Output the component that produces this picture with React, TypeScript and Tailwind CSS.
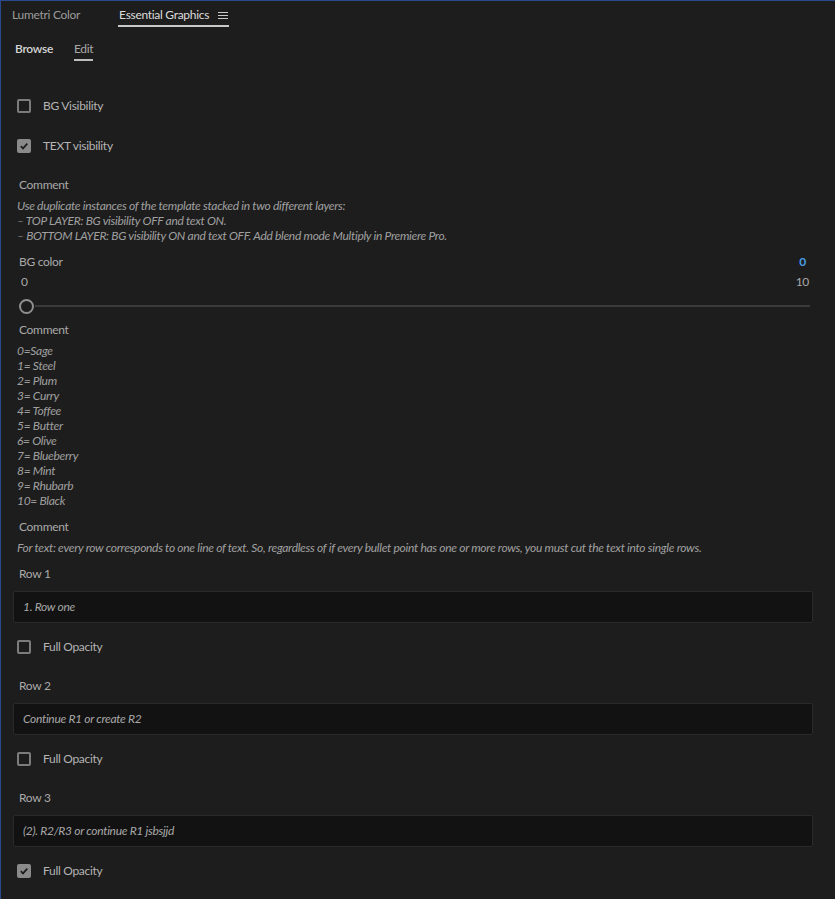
import React from "react";

const font = { fontFamily: "Lato, 'Open Sans', sans-serif" };

function Checkbox({ checked }: { checked?: boolean }) {
  if (checked) {
    return (
      <div className="w-[14px] h-[14px] rounded-[2px] bg-[#8a8a8a] flex items-center justify-center">
        <svg width="10" height="10" viewBox="0 0 10 10">
          <path d="M1.8 5.2 L4 7.4 L8.3 2.6" stroke="#1d1d1d" strokeWidth="1.7" fill="none" />
        </svg>
      </div>
    );
  }
  return <div className="w-[14px] h-[14px] rounded-[2px] border-2 border-[#7c7c7c]" />;
}

function CheckRow({ label, checked, mt }: { label: string; checked?: boolean; mt: string }) {
  return (
    <div className={`flex h-[20px] items-center pl-[16px] ${mt}`}>
      <Checkbox checked={checked} />
      <span className="ml-[12px] text-[12px] text-[#b4b4b4]">{label}</span>
    </div>
  );
}

function Label({ children, mt }: { children: React.ReactNode; mt: string }) {
  return <div className={`pl-[18px] leading-[16px] text-[12px] text-[#a9a9a9] ${mt}`}>{children}</div>;
}

function Input({ value }: { value: string }) {
  return (
    <div className="ml-[12px] mt-[9px] w-[800px] h-[32px] rounded-[2px] border border-[#2a2a2a] bg-[#121212] flex items-center pl-[9px]">
      <span className="italic text-[12px] text-[#a8a8a8]">{value}</span>
    </div>
  );
}

function RowBlock({ n, value, checked, first }: { n: number; value: string; checked?: boolean; first?: boolean }) {
  return (
    <>
      <Label mt={first ? "mt-[11px]" : "mt-[21px]"}>Row {n}</Label>
      <Input value={value} />
      <CheckRow label="Full Opacity" checked={checked} mt="mt-[14px]" />
    </>
  );
}

const colors = [
  "0=Sage",
  "1= Steel",
  "2= Plum",
  "3= Curry",
  "4= Toffee",
  "5= Butter",
  "6= Olive",
  "7= Blueberry",
  "8= Mint",
  "9= Rhubarb",
  "10= Black",
];

export default function App() {
  return (
    <div
      style={font}
      className="w-[835px] h-[899px] bg-[#1d1d1d] border-l border-t border-[#2b4a8c] overflow-hidden tracking-[-0.3px]"
    >
      {/* Panel tabs */}
      <div className="flex pl-[11px] text-[12px]">
        <div className="pt-[6px] pb-[2px] leading-[16px] border-b-2 border-transparent text-[#9b9b9b]">
          Lumetri Color
        </div>
        <div className="ml-[38px] pt-[6px] pb-[2px] pl-[1px] pr-[1px] leading-[16px] border-b-2 border-[#c8c8c8] text-[#dcdcdc] flex items-center">
          <span>Essential Graphics</span>
          <svg className="ml-[9px]" width="10" height="9" viewBox="0 0 10 9">
            <path d="M0 1.5 H10 M0 4.5 H10 M0 7.5 H10" stroke="#c8c8c8" strokeWidth="1" />
          </svg>
        </div>
      </div>

      {/* Browse / Edit */}
      <div className="flex pl-[14px] mt-[14px] text-[12px]">
        <div className="leading-[16px] pb-[2px] border-b-2 border-transparent text-[#d6d6d6] font-semibold">Browse</div>
        <div className="ml-[21px] leading-[16px] pb-[2px] border-b-2 border-[#bdbdbd] text-[#a9a9a9]">Edit</div>
      </div>

      <CheckRow label="BG Visibility" mt="mt-[35px]" />
      <CheckRow label="TEXT visibility" checked mt="mt-[20px]" />

      <Label mt="mt-[21px]">Comment</Label>
      <div className="pl-[16px] mt-[5px] italic text-[12px] leading-[15px] text-[#a0a0a0]">
        <div>Use duplicate instances of the template stacked in two different layers:</div>
        <div>– TOP LAYER: BG visibility OFF and text ON.</div>
        <div>– BOTTOM LAYER: BG visibility ON and text OFF. Add blend mode Multiply in Premiere Pro.</div>
      </div>

      <div className="flex justify-between pl-[18px] pr-[29px] mt-[11px] leading-[16px] text-[12px]">
        <span className="text-[#a9a9a9]">BG color</span>
        <span className="text-[#4a9de6] font-bold">0</span>
      </div>
      <div className="flex justify-between pl-[20px] pr-[26px] mt-[4px] leading-[16px] text-[12px] text-[#a9a9a9]">
        <span>0</span>
        <span>10</span>
      </div>
      <div className="flex items-center pl-[18px] pr-[25px] mt-[8px] h-[16px]">
        <div className="w-[15px] h-[15px] rounded-full border-2 border-[#8f8f8f] shrink-0" />
        <div className="flex-1 ml-[1px] h-[2px] bg-[#3a3a3a]" />
      </div>

      <Label mt="mt-[8px]">Comment</Label>
      <div className="pl-[16px] mt-[5px] italic text-[12px] leading-[15px] text-[#a0a0a0]">
        {colors.map((c) => (
          <div key={c}>{c}</div>
        ))}
      </div>

      <Label mt="mt-[11px]">Comment</Label>
      <div className="pl-[16px] mt-[5px] italic text-[12px] leading-[15px] text-[#a0a0a0]">
        For text: every row corresponds to one line of text. So, regardless of if every bullet point has one or more rows, you must cut the text into single rows.
      </div>

      <RowBlock n={1} value="1. Row one" first />
      <RowBlock n={2} value="Continue R1 or create R2" />
      <RowBlock n={3} value="(2). R2/R3 or continue R1 jsbsjjd" checked />
    </div>
  );
}
